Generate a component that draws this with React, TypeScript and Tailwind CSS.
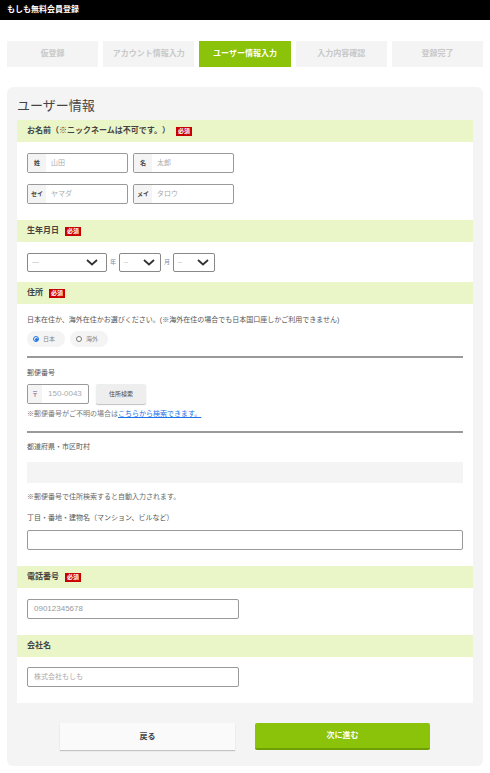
import React from "react";

const steps = ["仮登録", "アカウント情報入力", "ユーザー情報入力", "入力内容確認", "登録完了"];

function Badge() {
  return (
    <span className="ml-[6px] inline-flex h-[9px] items-center bg-[#c80000] px-[2px] text-[6px] font-bold leading-none text-white">
      必須
    </span>
  );
}

function SectionHeader({ title, required }: { title: string; required?: boolean }) {
  return (
    <div className="flex h-[22px] items-center bg-[#eaf6c8] px-[10px] text-[8px] font-bold text-[#444]">
      {title}
      {required && <Badge />}
    </div>
  );
}

function Chevron() {
  return (
    <svg width="12" height="7" viewBox="0 0 12 7" className="shrink-0">
      <path d="M1 1l5 4.5L11 1" fill="none" stroke="#333" strokeWidth="1.8" />
    </svg>
  );
}

function NameInput({ label, value }: { label: string; value: string }) {
  return (
    <div className="flex h-[20px] w-[101px] overflow-hidden rounded-[2px] border border-[#999] bg-white">
      <div className="flex w-[18px] items-center justify-center bg-[#f4f4f4] text-[6px] font-bold text-[#444]">
        {label}
      </div>
      <div className="flex items-center pl-[5px] text-[7px] text-[#aaa]">{value}</div>
    </div>
  );
}

function Radio({ label, checked }: { label: string; checked?: boolean }) {
  return (
    <div className="flex h-[16px] w-[38px] items-center gap-[4px] rounded-full bg-[#f4f4f4] pl-[6px] text-[6px] text-[#888]">
      {checked ? (
        <span className="flex h-[6px] w-[6px] items-center justify-center rounded-full border border-[#1a73e8]">
          <span className="h-[3px] w-[3px] rounded-full bg-[#1a73e8]" />
        </span>
      ) : (
        <span className="h-[6px] w-[6px] rounded-full border border-[#777] bg-white" />
      )}
      {label}
    </div>
  );
}

export default function App() {
  return (
    <div className="min-h-screen bg-white font-['Liberation_Sans','Noto_Sans_CJK_JP',sans-serif]">
      <div className="flex h-[20px] items-center bg-black px-[7px] text-[8px] font-bold text-white">
        もしも無料会員登録
      </div>

      <div className="mt-[21px] flex gap-[5px] px-[7px]">
        {steps.map((s, i) => (
          <div
            key={s}
            className={`flex h-[26px] flex-1 items-center justify-center text-[8px] font-bold ${
              i === 2 ? "bg-[#8bc20a] text-white" : "bg-[#f4f4f4] text-[#c8c8c8]"
            }`}
          >
            {s}
          </div>
        ))}
      </div>

      <div className="mx-[7px] mt-[20px] rounded-[6px] bg-[#f4f4f4] px-[10px] pb-[16px]">
        <h1 className="flex h-[33px] items-center pt-[5px] text-[13px] text-[#444]">ユーザー情報</h1>

        <div className="bg-white pb-[16px]">
          <SectionHeader title="お名前（※ニックネームは不可です。）" required />
          <div className="flex flex-col gap-[11px] px-[10px] pt-[11px] pb-[16px]">
            <div className="flex gap-[5px]">
              <NameInput label="姓" value="山田" />
              <NameInput label="名" value="太郎" />
            </div>
            <div className="flex gap-[5px]">
              <NameInput label="セイ" value="ヤマダ" />
              <NameInput label="メイ" value="タロウ" />
            </div>
          </div>

          <SectionHeader title="生年月日" required />
          <div className="flex items-center px-[10px] pt-[11px] pb-[10px] text-[6px] text-[#7a8aa8]">
            <div className="flex h-[19px] w-[80px] items-center justify-between rounded-[2px] border border-[#888] pl-[4px] pr-[8px] text-[#bbb]">
              <span className="text-[7px]">—</span>
              <Chevron />
            </div>
            <span className="mx-[3px]">年</span>
            <div className="flex h-[19px] w-[42px] items-center justify-between rounded-[2px] border border-[#888] pl-[4px] pr-[5px] text-[#bbb]">
              <span className="text-[7px]">–</span>
              <Chevron />
            </div>
            <span className="mx-[3px]">月</span>
            <div className="flex h-[19px] w-[42px] items-center justify-between rounded-[2px] border border-[#888] pl-[4px] pr-[5px] text-[#bbb]">
              <span className="text-[7px]">–</span>
              <Chevron />
            </div>
          </div>

          <SectionHeader title="住所" required />
          <div className="px-[10px] pt-[11px] pb-[16px] text-[7px] text-[#555]">
            <p className="leading-[10px]">
              日本在住か、海外在住かお選びください。(※海外在住の場合でも日本国口座しかご利用できません)
            </p>
            <div className="mt-[6px] flex gap-[5px]">
              <Radio label="日本" checked />
              <Radio label="海外" />
            </div>
            <div className="mt-[9px] h-[2px] bg-[#999]" />
            <p className="mt-[10px] leading-[10px]">郵便番号</p>
            <div className="mt-[6px] flex gap-[7px]">
              <div className="flex h-[20px] w-[62px] overflow-hidden rounded-[2px] border border-[#999]">
                <div className="flex w-[14px] items-center justify-center bg-[#f4f4f4] text-[6px] font-bold text-[#6b4c8a]">
                  〒
                </div>
                <div className="flex items-center pl-[6px] text-[8px] text-[#aaa]">150-0043</div>
              </div>
              <button className="h-[20px] w-[50px] rounded-[2px] bg-[#eeeeee] text-[6px] text-[#444] shadow-[0_1px_1px_rgba(0,0,0,0.25)]">
                住所検索
              </button>
            </div>
            <p className="mt-[5px] leading-[10px] text-[#1a73e8]">
              <span className="text-[#777]">※郵便番号がご不明の場合は</span>
              <span className="underline">こちらから検索できます。</span>
            </p>
            <div className="mt-[12px] h-[2px] bg-[#999]" />
            <p className="mt-[9px] leading-[10px]">都道府県・市区町村</p>
            <div className="mt-[10px] h-[21px] bg-[#f4f4f4]" />
            <p className="mt-[9px] leading-[10px] text-[#666]">※郵便番号で住所検索すると自動入力されます。</p>
            <p className="mt-[11px] leading-[10px]">丁目・番地・建物名（マンション、ビルなど）</p>
            <div className="mt-[7px] h-[20px] rounded-[2px] border border-[#999]" />
          </div>

          <SectionHeader title="電話番号" required />
          <div className="px-[10px] pt-[11px] pb-[16px]">
            <div className="flex h-[20px] w-[212px] items-center rounded-[2px] border border-[#999] px-[6px] text-[8px] text-[#999]">
              09012345678
            </div>
          </div>

          <SectionHeader title="会社名" />
          <div className="px-[10px] pt-[10px]">
            <div className="flex h-[20px] w-[212px] items-center rounded-[2px] border border-[#999] px-[6px] text-[7px] text-[#aaa]">
              株式会社もしも
            </div>
          </div>
        </div>

        <div className="mt-[20px] flex justify-center gap-[20px]">
          <button className="h-[27px] w-[175px] bg-[#fafafa] text-[8px] font-bold text-[#444] shadow-[0_1px_1px_rgba(0,0,0,0.2)]">
            戻る
          </button>
          <button className="h-[27px] w-[175px] rounded-[2px] border-b-2 border-[#6f9e05] bg-[#8bc20a] text-[8px] font-bold text-white">
            次に進む
          </button>
        </div>
      </div>
    </div>
  );
}
